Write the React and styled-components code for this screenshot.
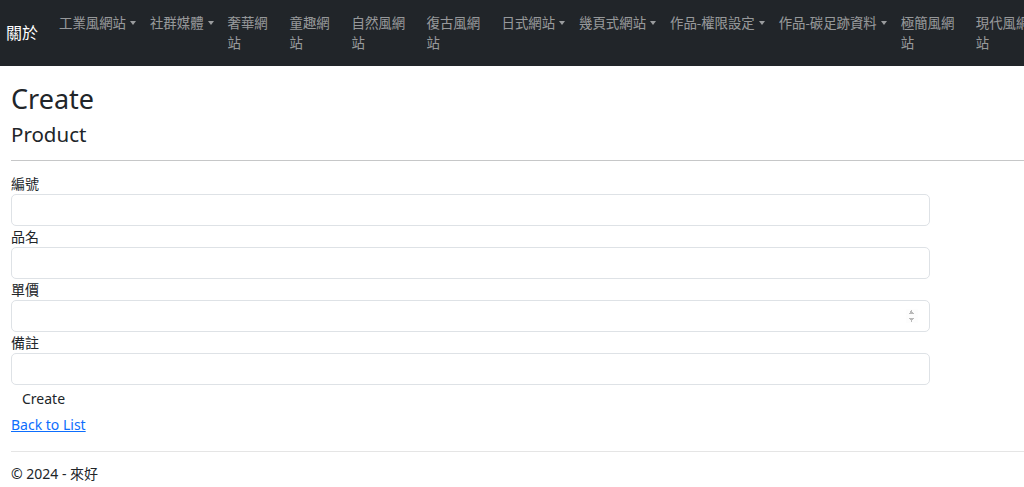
import styled, { createGlobalStyle } from 'styled-components'

const Global = createGlobalStyle`
  html, body { margin: 0; padding: 0; background: #fff; }
  body {
    font-family: "Segoe UI", "Noto Sans", "Noto Sans CJK TC", sans-serif;
    font-size: 14px;
    color: #212529;
    overflow: hidden;
  }
`

const Navbar = styled.nav`
  height: 66px;
  background: #212529;
  display: flex;
  align-items: flex-start;
  padding: 0 0 0 6px;
  white-space: nowrap;
  overflow: hidden;
`

const Brand = styled.a`
  color: #fff;
  font-size: 16px;
  line-height: 22px;
  margin: 22px 14px 0 0;
  text-decoration: none;
`

const NavList = styled.ul`
  list-style: none;
  display: flex;
  margin: 0;
  padding: 0;
  flex-shrink: 0;
`

const NavItem = styled.li`
  padding: 13px 7px 0;
  width: ${p => (p.$w ? p.$w + 'px' : 'auto')};
  white-space: ${p => (p.$w ? 'normal' : 'nowrap')};
  flex-shrink: 0;
  color: rgba(255, 255, 255, 0.55);
  font-size: 13.4px;
  line-height: 20px;
  box-sizing: content-box;
`

const Caret = styled.span`
  display: inline-block;
  margin-left: 4px;
  vertical-align: 3px;
  border-top: 4px solid rgba(255, 255, 255, 0.55);
  border-left: 3.5px solid transparent;
  border-right: 3.5px solid transparent;
`

const Main = styled.main`
  padding: 0 0 0 11px;
`

const Title = styled.h1`
  font-size: 27px;
  font-weight: 400;
  line-height: 34px;
  margin: 16px 0 0;
`

const Subtitle = styled.h4`
  font-size: 20.5px;
  font-weight: 400;
  line-height: 26px;
  margin: 5px 0 0;
`

const Rule = styled.hr`
  border: 0;
  border-top: 1px solid #c6c7c8;
  margin: 13px 0 13px;
`

const Form = styled.form`
  width: 919px;
`

const Group = styled.div`
  display: flex;
  flex-direction: column;
`

const Label = styled.label`
  font-size: 14px;
  line-height: 20px;
`

const Input = styled.input`
  height: 32px;
  box-sizing: border-box;
  border: 1px solid #dee2e6;
  border-radius: 5px;
  padding: 0 10px;
  font: inherit;
  margin-bottom: 1px;
  outline: none;
  &::-webkit-inner-spin-button {
    opacity: 0.6;
    height: 18px;
    transform: scale(0.8);
  }
`

const Button = styled.button`
  background: none;
  border: 0;
  font: inherit;
  font-size: 14px;
  color: #212529;
  padding: 0 11px;
  line-height: 20px;
  margin-top: 3px;
`

const BackLink = styled.a`
  display: block;
  color: #0d6efd;
  font-size: 14px;
  line-height: 20px;
  margin-top: 6px;
  text-decoration: underline;
`

const Footer = styled.footer`
  margin: 16px 0 0 11px;
  border-top: 1px solid #e5e5e5;
  padding-top: 12px;
  font-size: 14px;
  line-height: 20px;
`

const navItems = [
  { t: '工業風網站', drop: true },
  { t: '社群媒體', drop: true },
  { t: '奢華網站', w: 48 },
  { t: '童趣網站', w: 48 },
  { t: '自然風網站', w: 61 },
  { t: '復古風網站', w: 61 },
  { t: '日式網站', drop: true },
  { t: '幾頁式網站', drop: true },
  { t: '作品-權限設定', drop: true },
  { t: '作品-碳足跡資料', drop: true },
  { t: '極簡風網站', w: 61 },
  { t: '現代風網站', w: 61 },
]

const fields = [
  { label: '編號', type: 'text' },
  { label: '品名', type: 'text' },
  { label: '單價', type: 'number' },
  { label: '備註', type: 'text' },
]

export default function App() {
  return (
    <>
      <Global />
      <Navbar>
        <Brand href="#">關於</Brand>
        <NavList>
          {navItems.map(item => (
            <NavItem key={item.t} $w={item.w}>
              {item.t}
              {item.drop && <Caret />}
            </NavItem>
          ))}
        </NavList>
      </Navbar>
      <Main>
        <Title>Create</Title>
        <Subtitle>Product</Subtitle>
        <Rule />
        <Form onSubmit={e => e.preventDefault()}>
          {fields.map(f => (
            <Group key={f.label}>
              <Label>{f.label}</Label>
              <Input type={f.type} />
            </Group>
          ))}
          <Button type="submit">Create</Button>
        </Form>
        <BackLink href="#">Back to List</BackLink>
      </Main>
      <Footer>© 2024 - 來好</Footer>
    </>
  )
}
